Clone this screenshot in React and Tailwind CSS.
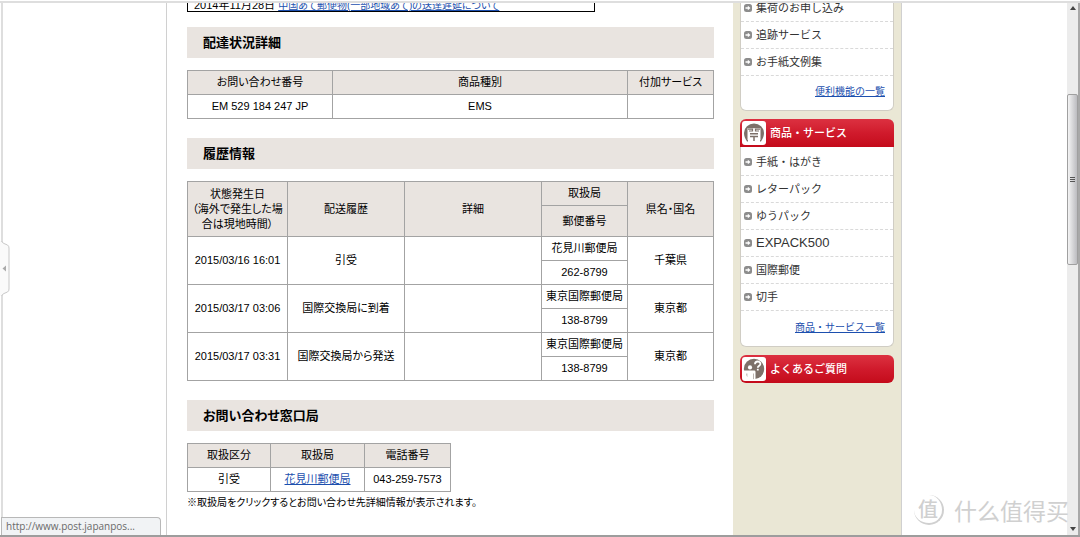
import clsx from "clsx";

const history = [
  {
    date: "2015/03/16 16:01",
    status: "引受",
    office: "花見川郵便局",
    zip: "262-8799",
    area: "千葉県",
  },
  {
    date: "2015/03/17 03:06",
    status: "国際交換局に到着",
    office: "東京国際郵便局",
    zip: "138-8799",
    area: "東京都",
  },
  {
    date: "2015/03/17 03:31",
    status: "国際交換局から発送",
    office: "東京国際郵便局",
    zip: "138-8799",
    area: "東京都",
  },
];

const toolLinks = [
  { label: "集荷のお申し込み" },
  { label: "追跡サービス" },
  { label: "お手紙文例集" },
];
const productLinks = [
  { label: "手紙・はがき" },
  { label: "レターパック" },
  { label: "ゆうパック" },
  { label: "EXPACK500", latin: true },
  { label: "国際郵便" },
  { label: "切手" },
];

const SectionTitle = ({ children }) => (
  <h2 className="h-[31px] bg-[#e9e4e0] pl-4 text-[13px] leading-8 font-bold text-black">
    {children}
  </h2>
);

const Th = ({ className, ...props }) => (
  <th
    className={clsx(
      "border border-[#a3a3a3] bg-[#e9e4e0] p-0 font-normal",
      className ?? "h-6"
    )}
    {...props}
  />
);

const Td = (props) => (
  <td className="h-6 border border-[#a3a3a3] p-0" {...props} />
);

const Bullet = () => (
  <svg viewBox="0 0 8 8" className="size-2 shrink-0" aria-hidden="true">
    <rect width="8" height="8" rx="2.5" fill="#8c8c8c" />
    <path d="M1.5 3.2h2.3V1.8L6.5 4 3.8 6.2V4.8H1.5z" fill="#fff" />
  </svg>
);

const PostIcon = () => (
  <svg viewBox="0 0 24 24" className="size-6" aria-hidden="true">
    <rect width="24" height="24" rx="3" fill="#fff" />
    <path
      d="M5 20.5C3 17.5 2 15 2 12a10 9.5 0 0 1 20 0c0 3-1 5.500-3 8.500h-1V8H6v12.500z"
      fill="#7d7069"
    />
    <path d="M5.500 7.200h13V19h-13z" fill="#fff" />
    <path
      d="M6 8.200h4.500v1.800H7M18 8.200h-4.500v1.800H17"
      stroke="#7d7069"
      strokeWidth="1.200"
      fill="none"
    />
    <path
      d="M8 12.800h8M8 15.500h8M12 15.500v4.500"
      stroke="#7d7069"
      strokeWidth="1.5"
      fill="none"
    />
  </svg>
);

const FaqIcon = () => (
  <svg viewBox="0 0 24 24" className="size-6" aria-hidden="true">
    <rect width="24" height="24" rx="3" fill="#fff" />
    <circle cx="12" cy="12" r="10.2" fill="#7d7069" />
    <circle cx="8" cy="10.4" r="2.1" fill="#fff" />
    <path
      d="M1 13.500h11.200q1.300 0 1.300 1.300V23h-1.800v-6.500h-.5V23H5.200v-6.500h-.6V21H1z"
      fill="#fff"
    />
    <path
      d="M13 7.300c0-3.700 5.400-3.600 5.400-.4 0 2-2.600 1.700-2.600 3.900"
      stroke="#fff"
      strokeWidth="1.800"
      fill="none"
    />
    <path d="M14.900 11.800h1.800v1.700h-1.800z" fill="#fff" />
  </svg>
);

const MenuHeader = ({ icon, children, className }) => (
  <h3
    className={clsx(
      "flex h-7 items-center gap-1 bg-linear-to-b from-[#dc3040] via-[#d01a2c] to-[#c40a1a] pl-0.5 text-[11px] font-medium text-white",
      className
    )}
  >
    {icon}
    {children}
  </h3>
);

const MenuList = ({ items }) => (
  <ul>
    {items.map(({ label, latin }) => (
      <li
        key={label}
        className="h-[27px] border-b border-dashed border-[#d9d9d9]"
      >
        <a
          href="#"
          className={clsx(
            "flex h-full items-center gap-1 pl-[3px] text-[#333]",
            latin ? "text-[13px]" : "text-[11px]"
          )}
        >
          <Bullet />
          {label}
        </a>
      </li>
    ))}
  </ul>
);

const MoreLink = ({ children }) => (
  <p className="h-[34px] pr-2 text-right text-[10px] leading-8">
    <a href="#" className="text-[#1c4fae] underline">
      {children}
    </a>
  </p>
);

const Sidebar = () => (
  <aside className="w-42 shrink-0 bg-[#eae7d5] px-[7px]">
    <div className="rounded-b-md border border-t-0 border-[#d0cdc4] bg-white pt-px">
      <MenuList items={toolLinks} />
      <MoreLink>便利機能の一覧</MoreLink>
    </div>
    <div className="mt-2 rounded-md border border-t-0 border-[#d0cdc4] bg-white">
      <MenuHeader icon={<PostIcon />} className="-mx-px mb-0.5 rounded-t-md">
        商品・サービス
      </MenuHeader>
      <MenuList items={productLinks} />
      <div className="pt-px">
        <MoreLink>商品・サービス一覧</MoreLink>
      </div>
    </div>
    <a href="#" className="mt-2 block">
      <MenuHeader icon={<FaqIcon />} className="rounded-md">
        よくあるご質問
      </MenuHeader>
    </a>
  </aside>
);

const Tracking = () => (
  <main className="flex-1 pr-[19px] pl-5 text-[11px] leading-[15px] text-black [font-feature-settings:'palt']">
    <div className="mr-[119px] h-[18px] border border-t-0 border-black pl-1.5 leading-[22px]">
      2014年11月28日{" "}
      <a href="#" className="text-[10px] text-[#1c4fae] underline">
        中国あて郵便物(一部地域あて)の送達遅延について
      </a>
    </div>

    <div className="mt-[15px]">
      <SectionTitle>配達状況詳細</SectionTitle>
    </div>
    <table className="mt-3 w-full table-fixed border-collapse text-center">
      <thead>
        <tr>
          <Th className="h-6 w-[145px]">お問い合わせ番号</Th>
          <Th>商品種別</Th>
          <Th className="h-6 w-[86px]">付加サービス</Th>
        </tr>
      </thead>
      <tbody>
        <tr>
          <Td>EM 529 184 247 JP</Td>
          <Td>EMS</Td>
          <Td />
        </tr>
      </tbody>
    </table>

    <div className="mt-[19px]">
      <SectionTitle>履歴情報</SectionTitle>
    </div>
    <table className="mt-3 w-full table-fixed border-collapse text-center">
      <colgroup>
        <col className="w-[100px]" />
        <col className="w-[117px]" />
        <col />
        <col className="w-[86px]" />
        <col className="w-[86px]" />
      </colgroup>
      <thead>
        <tr>
          <Th rowSpan={2}>
            状態発生日
            <br />
            （海外で発生した場
            <br />
            合は現地時間）
          </Th>
          <Th rowSpan={2}>配送履歴</Th>
          <Th rowSpan={2}>詳細</Th>
          <Th>取扱局</Th>
          <Th rowSpan={2}>県名・国名</Th>
        </tr>
        <tr>
          <Th className="h-[31px]">郵便番号</Th>
        </tr>
      </thead>
      {history.map((row) => (
        <tbody key={row.date}>
          <tr>
            <Td rowSpan={2}>{row.date}</Td>
            <Td rowSpan={2}>{row.status}</Td>
            <Td rowSpan={2} />
            <Td>{row.office}</Td>
            <Td rowSpan={2}>{row.area}</Td>
          </tr>
          <tr>
            <Td>{row.zip}</Td>
          </tr>
        </tbody>
      ))}
    </table>

    <div className="mt-[19px]">
      <SectionTitle>お問い合わせ窓口局</SectionTitle>
    </div>
    <table className="mt-3 w-[264px] table-fixed border-collapse text-center">
      <thead>
        <tr>
          <Th className="h-6 w-[83px]">取扱区分</Th>
          <Th>取扱局</Th>
          <Th className="h-6 w-[86px]">電話番号</Th>
        </tr>
      </thead>
      <tbody>
        <tr>
          <Td>引受</Td>
          <Td>
            <a href="#" className="text-[#1c4fae] underline">
              花見川郵便局
            </a>
          </Td>
          <Td>043-259-7573</Td>
        </tr>
      </tbody>
    </table>
    <p className="mt-[3px] text-[10px]">
      ※取扱局をクリックするとお問い合わせ先詳細情報が表示されます。
    </p>
  </main>
);

const Scrollbar = () => (
  <div className="flex w-[13px] shrink-0 flex-col items-center border-r-2 border-[#a8a8a8] bg-[#ececec]">
    <svg viewBox="0 0 6 4" className="mt-[3px] h-1 w-1.5" aria-hidden="true">
      <path d="M3 0l3 4H0z" fill="#444" />
    </svg>
    <div className="mt-[84px] flex h-[171px] w-full flex-col items-center justify-center gap-px rounded-xs border border-[#a0a0a0] bg-linear-to-r from-[#f4f4f4] to-[#bcbcc0]">
      <span className="h-px w-[5px] bg-[#555]" />
      <span className="h-px w-[5px] bg-[#555]" />
      <span className="h-px w-[5px] bg-[#555]" />
    </div>
    <svg viewBox="0 0 6 4" className="mt-auto mb-1 h-1 w-1.5" aria-hidden="true">
      <path d="M0 0h6L3 4z" fill="#444" />
    </svg>
  </div>
);

const Watermark = () => (
  <div className="absolute right-[11px] bottom-2.5 flex items-center gap-2.5 text-[#d0d0d0] font-['Noto_Sans_CJK_SC',sans-serif]">
    <span className="flex size-[30px] items-center justify-center rounded-full border-r-2 border-b-2 border-[#d0d0d0] text-xl font-medium">
      值
    </span>
    <span className="text-[23px] leading-7">什么值得买</span>
  </div>
);

const App = () => {
  return (
    <div className="relative flex h-screen flex-col overflow-hidden border-b-2 border-[#9d9d9d] bg-white font-['Liberation_Sans','Noto_Sans_CJK_JP',sans-serif]">
      <div className="mt-px h-0.5 shrink-0 bg-[#dedede]" />
      <div className="flex min-h-0 flex-1">
        <div className="ml-px w-0.5 shrink-0 bg-[#dedede]" />
        <div className="flex-1 overflow-hidden pr-0.5">
          <div className="mx-auto -mt-[9px] flex min-h-[calc(100%+9px)] max-w-[736px] border-x border-[#d0d0d0]">
            <Tracking />
            <Sidebar />
          </div>
        </div>
        <Scrollbar />
      </div>

      {/* side panel handle */}
      <button
        type="button"
        aria-label="パネルを開く"
        className="absolute top-[241px] left-0 h-[55px] w-2.5"
      >
        <svg viewBox="0 0 10 55" className="h-full w-full" aria-hidden="true">
          <path
            d="M0 0h1.5Q2 1.5 4 2.5l3.5 1.5Q9 5 9 7v41q0 2-1.5 3L4 52.5Q2 53.5 1.5 55H0z"
            fill="#fafafa"
          />
          <path
            d="M1.5 0Q2 1.5 4 2.5l3.5 1.5Q9 5 9 7v41q0 2-1.5 3L4 52.5Q2 53.5 1.5 55"
            fill="none"
            stroke="#c8c8c8"
          />
          <path d="M6 24.5v6l-3.5-3z" fill="#aaa" />
        </svg>
      </button>

      <Watermark />

      {/* status bubble */}
      <div className="absolute bottom-0 left-px h-[18px] w-40 rounded-tr-sm border border-b-0 border-[#b8b8b8] bg-[#f1f3f5] pl-1 font-['Open_Sans',sans-serif] text-[10px] leading-4 text-[#6a6a6a]">
        http://www.post.japanpos...
      </div>
    </div>
  );
};

export default App;
